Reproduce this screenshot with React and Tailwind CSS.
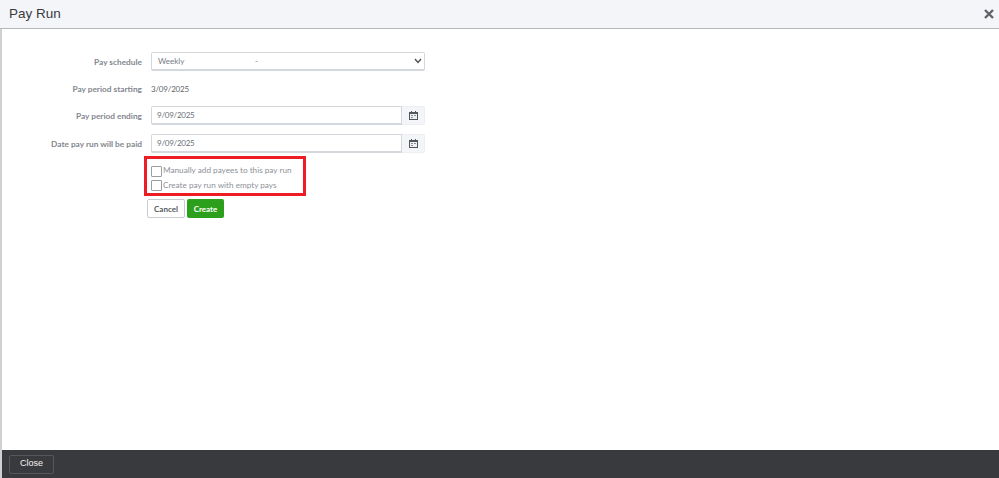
import React from 'react';

function Label({ children }) {
  return <div className="w-[142px] shrink-0 pt-px text-right text-[8.3px] font-bold whitespace-nowrap text-[#83878e]">{children}</div>;
}

function CalendarIcon() {
  return (
    <svg width="9" height="9" viewBox="0 0 9 9">
      <rect x="0.5" y="1.5" width="8" height="7" fill="#eef0f2" stroke="#50565c" />
      <rect x="0" y="1" width="9" height="2" fill="#50565c" />
      <rect x="2" y="0" width="1" height="2" fill="#50565c" />
      <rect x="6" y="0" width="1" height="2" fill="#50565c" />
      <rect x="2" y="4" width="2" height="1" fill="#8a8f95" />
      <rect x="5" y="4" width="2" height="1" fill="#8a8f95" />
      <rect x="2" y="6" width="2" height="1" fill="#8a8f95" />
    </svg>
  );
}

function DateField({ label, value, className }) {
  return (
    <div className={`flex items-center ${className}`}>
      <Label>{label}</Label>
      <div className="ml-[9px] flex h-[19px] w-[274px]">
        <div className="flex flex-1 items-center rounded-l-[2px] border border-b-2 border-[#d4d7dc] bg-white pb-px pl-[5px] text-[8px] tracking-[-0.25px] text-[#6b7076]">{value}</div>
        <div className="flex w-[23px] items-center justify-center rounded-r-[2px] border border-l-0 border-[#eceef1] bg-[#f4f5f8]">
          <CalendarIcon />
        </div>
      </div>
    </div>
  );
}

function CheckRow({ label }) {
  return (
    <div className="flex h-[15px] items-center">
      <span className="h-[11px] w-[11px] shrink-0 rounded-[1px] border border-[#9a9ea3] bg-white" />
      <span className="ml-px -mt-[2px] text-[8.2px] whitespace-nowrap text-[#8d9197]">{label}</span>
    </div>
  );
}

export default function App() {
  return (
    <div className="flex h-[478px] w-[999px] flex-col overflow-hidden bg-white font-['Lato',sans-serif]">
      <div className="flex h-[29px] shrink-0 items-center justify-between border-b border-[#b4b6b8] bg-[#f4f5f8] pl-[9px] pr-[4px]">
        <h1 className="font-['Liberation_Sans',sans-serif] text-[13.5px] leading-none text-[#393a3d]">Pay Run</h1>
        <svg width="10" height="10" viewBox="0 0 10 10" className="mr-px">
          <path d="M1 1 L9 9 M9 1 L1 9" stroke="#5f6469" strokeWidth="2.4" />
        </svg>
      </div>

      <div className="flex-1 border-l-2 border-[#d0d0d0] pt-[23px]">
        <div className="-ml-[2px]">
          <div className="flex h-[19px] items-center">
            <Label>Pay schedule</Label>
            <div className="ml-[9px] flex h-[19px] w-[274px] items-center rounded-[2px] border border-b-2 border-[#d4d7dc] bg-white pb-px pl-[6px] pr-[2px] text-[8px] text-[#75797f]">
              <span className="w-[97px]">Weekly</span>
              <span className="flex-1">-</span>
              <svg width="8" height="6" viewBox="0 0 8 6">
                <path d="M1 1 L4 4.5 L7 1" fill="none" stroke="#4a4d52" strokeWidth="1.3" />
              </svg>
            </div>
          </div>

          <div className="mt-[9px] flex h-[18px] items-center">
            <Label>Pay period starting</Label>
            <span className="ml-[9px] text-[8px] tracking-[-0.2px] text-[#62676c]">3/09/2025</span>
          </div>

          <DateField label="Pay period ending" value="9/09/2025" className="mt-[8px]" />
          <DateField label="Date pay run will be paid" value="9/09/2025" className="mt-[9px]" />

          <div className="ml-[144px] mt-[3px] flex h-[40px] w-[162px] flex-col border-[3px] border-[#ee1c25] pl-[4px] pt-[5px]">
            <CheckRow label="Manually add payees to this pay run" />
            <CheckRow label="Create pay run with empty pays" />
          </div>

          <div className="ml-[147px] mt-[3px] flex gap-[2px]">
            <button className="h-[19px] w-[38px] rounded-[2px] border border-[#c8cbd0] bg-white text-[8px] font-bold text-[#55595e]">Cancel</button>
            <button className="h-[19px] w-[37px] rounded-[2px] bg-[#2ca01c] text-[8px] font-bold text-white">Create</button>
          </div>
        </div>
      </div>

      <div className="flex h-[28px] shrink-0 items-center border-l-2 border-[#d0d0d0] bg-[#393a3d] pl-[7px]">
        <button className="h-[19px] w-[45px] rounded-[2px] border border-[#55575b] font-['Liberation_Sans',sans-serif] text-[9px] text-[#f4f4f4]">Close</button>
      </div>
    </div>
  );
}
